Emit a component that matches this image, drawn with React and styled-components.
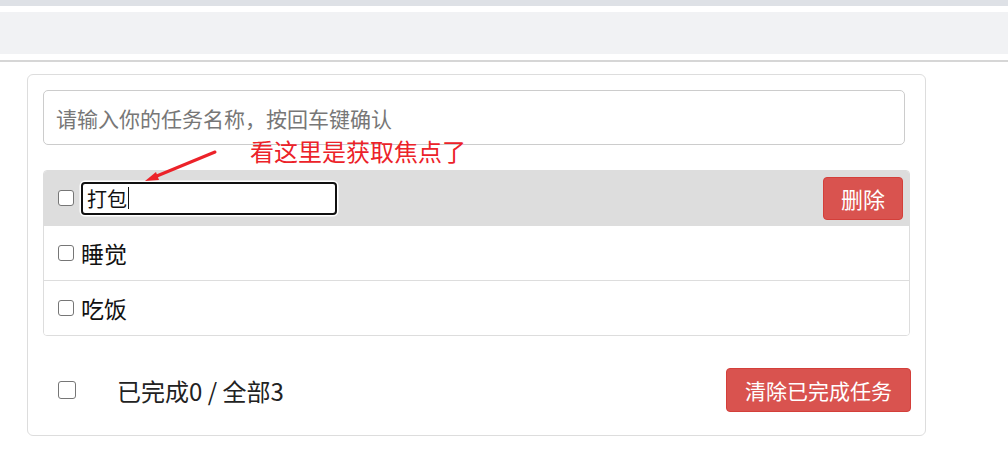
import React from "react";
import styled, { createGlobalStyle } from "styled-components";

const Global = createGlobalStyle`
  html, body { margin: 0; padding: 0; background: #fff; }
  body { font-family: "Noto Sans CJK SC", "Noto Sans", sans-serif; color: #222; }
  * { box-sizing: border-box; }
`;

const TopStrip = styled.div`
  height: 6px;
  background: #dee1e6;
`;

const Toolbar = styled.div`
  height: 42px;
  margin-top: 6px;
  background: #f1f2f4;
`;

const Divider = styled.div`
  height: 2px;
  margin-top: 6px;
  background: #d6d6d6;
`;

const Main = styled.main`
  padding: 12px 0 0 27px;
`;

const Card = styled.section`
  position: relative;
  width: 899px;
  border: 1px solid #dddddd;
  border-radius: 6px;
  padding: 15px 15px 23px 15px;
`;

const TaskInput = styled.input`
  display: block;
  width: 862px;
  height: 55px;
  border: 1px solid #cccccc;
  border-radius: 5px;
  padding: 0 12px;
  font-family: inherit;
  font-size: 21px;
  color: #222;
  outline: none;
  &::placeholder { color: #777; }
`;

const List = styled.ul`
  list-style: none;
  margin: 25px 0 0 0;
  padding: 0;
  width: 867px;
  border: 1px solid #dddddd;
  border-radius: 4px;
  overflow: hidden;
`;

const Row = styled.li`
  display: flex;
  align-items: center;
  height: 55px;
  padding: 0 6px 0 14px;
  background: ${(p) => (p.$active ? "#dddddd" : "#fff")};
  border-bottom: 1px solid #dddddd;
  &:last-child { border-bottom: none; height: 54px; }
`;

const Check = styled.input.attrs({ type: "checkbox" })`
  appearance: none;
  margin: 0;
  flex: none;
  width: ${(p) => p.$size || 16}px;
  height: ${(p) => p.$size || 16}px;
  border: 1px solid #767676;
  border-radius: 3px;
  background: #fff;
`;

const ItemText = styled.span`
  margin-left: 7px;
  font-size: 23px;
  line-height: 1;
  color: #111;
`;

const EditField = styled.div`
  display: flex;
  align-items: center;
  margin-left: 7px;
  width: 256px;
  height: 33px;
  border: 2.5px solid #101010;
  border-radius: 4px;
  box-shadow: 0 0 0 1.5px #ffffff;
  background: #fff;
  padding: 0 4px;
  font-size: 20px;
  color: #111;
`;

const Caret = styled.span`
  display: inline-block;
  width: 1px;
  height: 22px;
  background: #111;
  margin-left: 1px;
`;

const DangerButton = styled.button`
  margin-left: auto;
  height: ${(p) => p.$h || 43}px;
  padding: 0 ${(p) => p.$px || 17}px;
  background: #d9534f;
  border: 1px solid #d43f3a;
  border-radius: 4px;
  color: #fff;
  font-family: inherit;
  font-size: ${(p) => p.$fs || 22}px;
  line-height: 1;
`;

const Footer = styled.div`
  display: flex;
  align-items: center;
  margin-top: 32px;
  padding-left: 15px;
  width: 868px;
`;

const Summary = styled.span`
  margin-left: 41px;
  font-size: 24px;
  color: #222;
`;

const Note = styled.div`
  position: absolute;
  left: 222px;
  top: 64px;
  font-size: 24px;
  line-height: 24px;
  color: #ec2229;
  white-space: nowrap;
`;

const ArrowSvg = styled.svg`
  position: absolute;
  left: 110px;
  top: 70px;
  overflow: visible;
`;

const tasks = [
  { id: 1, name: "打包", editing: true },
  { id: 2, name: "睡觉" },
  { id: 3, name: "吃饭" },
];

export default function App() {
  return (
    <>
      <Global />
      <TopStrip />
      <Toolbar />
      <Divider />
      <Main>
        <Card>
          <TaskInput placeholder="请输入你的任务名称，按回车键确认" />
          <List>
            {tasks.map((t) => (
              <Row key={t.id} $active={t.editing}>
                <Check />
                {t.editing ? (
                  <>
                    <EditField>
                      {t.name}
                      <Caret />
                    </EditField>
                    <DangerButton>删除</DangerButton>
                  </>
                ) : (
                  <ItemText>{t.name}</ItemText>
                )}
              </Row>
            ))}
          </List>
          <Footer>
            <Check $size={18} />
            <Summary>已完成0 / 全部3</Summary>
            <DangerButton $h={44} $px={18} $fs={21}>清除已完成任务</DangerButton>
          </Footer>
          <Note>看这里是获取焦点了</Note>
          <ArrowSvg width="80" height="40" viewBox="0 0 80 40">
            <line x1="77" y1="7" x2="14" y2="33" stroke="#ec2229" strokeWidth="3" strokeLinecap="round" />
            <polygon points="7,36 18,27 21,35" fill="#ec2229" />
          </ArrowSvg>
        </Card>
      </Main>
    </>
  );
}
